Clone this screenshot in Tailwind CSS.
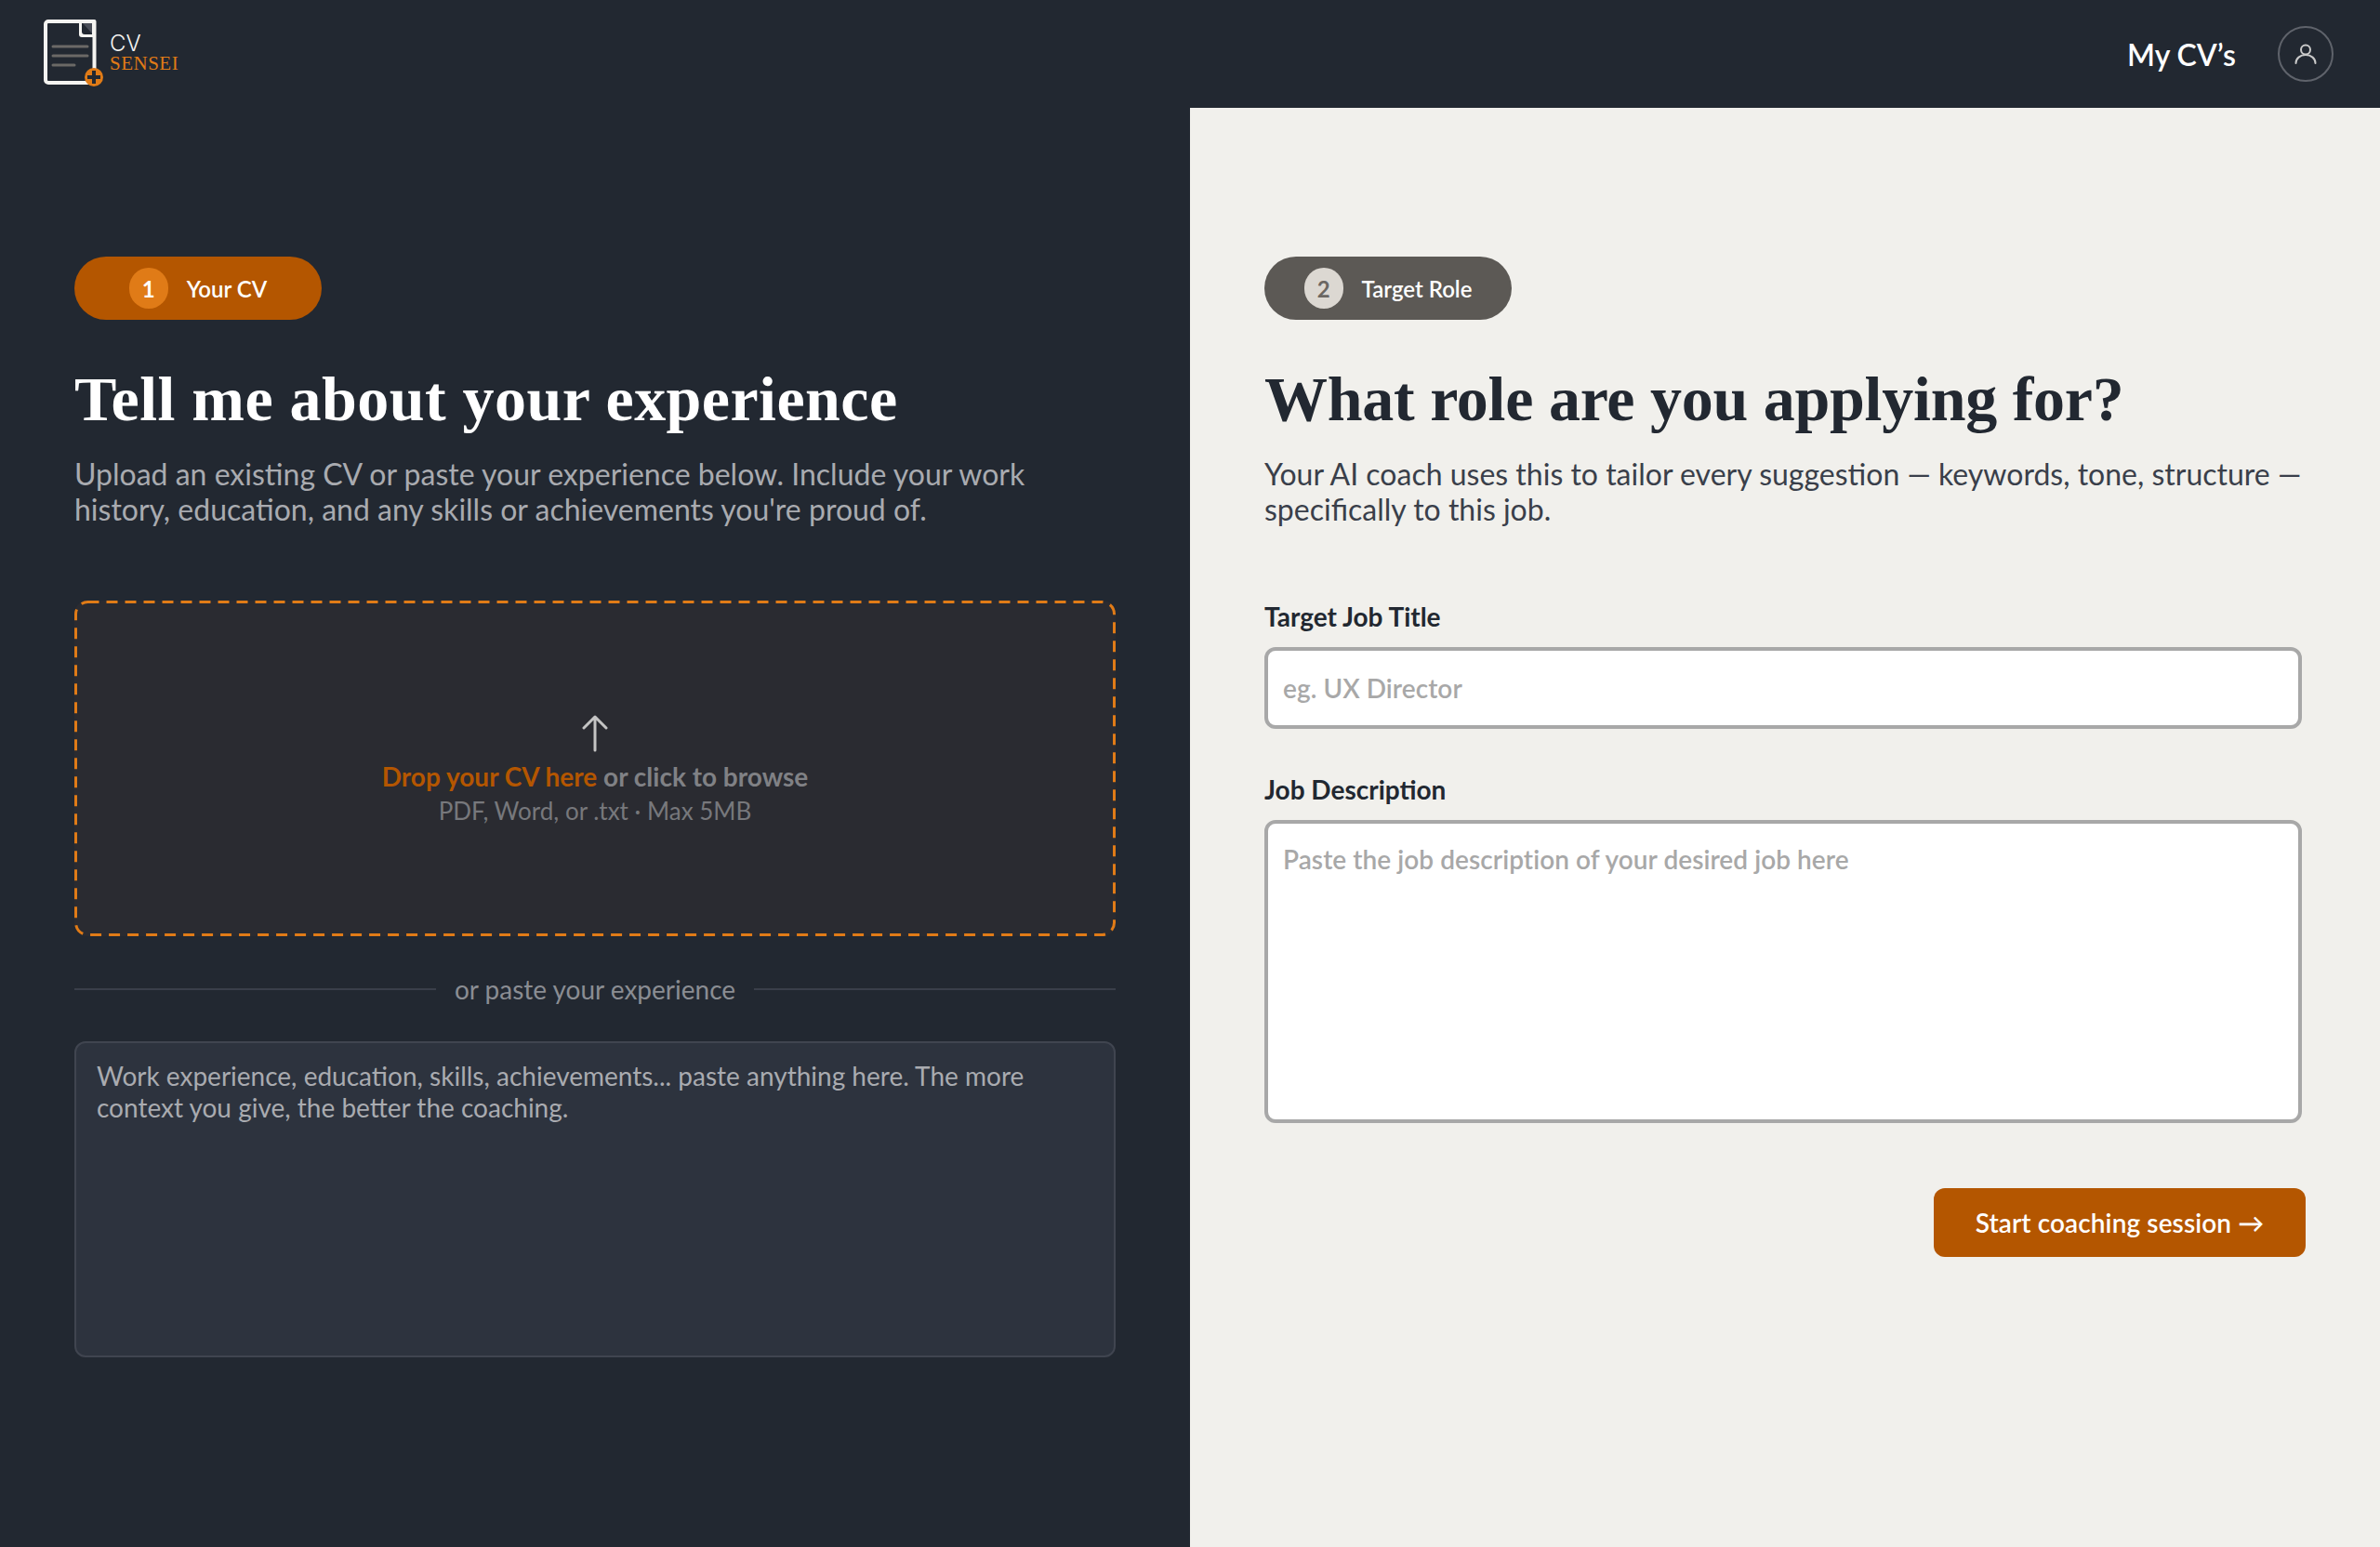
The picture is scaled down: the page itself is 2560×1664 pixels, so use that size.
<!DOCTYPE html>
<html lang="en">
<head>
  <meta charset="UTF-8" />
  <meta name="viewport" content="width=device-width, initial-scale=1.0"/>
  <title>CV Sensei</title>
  <script src="https://cdn.jsdelivr.net/npm/@tailwindcss/browser@4"></script>
</head>
<body class="bg-[#222831] font-['Lato',sans-serif] h-[1664px] overflow-hidden flex flex-col">
  <!-- top bar -->
  <header class="h-[116px] shrink-0 flex items-center justify-between pl-[47px] pr-[50px]">
    <div class="flex items-center pt-[2px]">
      <svg class="w-[150px] h-[76px]" viewBox="0 0 150 76" fill="none">
        <path d="M5 2h49.500V68H5a3 3 0 0 1-3-3V5a3 3 0 0 1 3-3z" stroke="#f5f4f1" stroke-width="4" stroke-linejoin="round"/>
        <path d="M38 2h16.500V19H41a3 3 0 0 1-3-3z" fill="#f5f4f1"/>
        <path d="M41 4h11v12H44a3 3 0 0 1-3-3z" fill="#222831"/>
        <path d="M42 4l10 11V4z" fill="#4a4e58"/>
        <path d="M10 29h37M10 39h37M10 49h23" stroke="#6b6966" stroke-width="3" stroke-linecap="round"/>
        <circle cx="54" cy="62" r="10" fill="#e07b17"/>
        <path d="M54 55v14M47 62h14" stroke="#222831" stroke-width="4"/>
        <text x="71" y="34" class="text-[24px] font-['Inter',sans-serif] font-light fill-[#f5f4f1]">CV</text>
        <text x="71" y="54" class="text-[21px] font-['Liberation_Serif',serif] tracking-[0.5px] fill-[#e07b17]">SENSEI</text>
      </svg>
    </div>
    <div class="flex items-center gap-[45px]">
      <a class="pt-[2px] text-[32px] font-semibold text-white">My CV’s</a>
      <div class="w-[60px] h-[60px] rounded-full border-2 border-[#5f636b] flex items-center justify-center">
        <svg class="w-[24px] h-[24px]" viewBox="0 0 24 24" fill="none" stroke="#c9c9c9" stroke-width="2" stroke-linecap="round">
          <circle cx="12" cy="7.500" r="5"/>
          <path d="M1.500 22c0-5 4.500-9 10.500-9s10.500 4 10.500 9"/>
        </svg>
      </div>
    </div>
  </header>

  <main class="flex-1 grid grid-cols-2">
    <!-- left: your CV -->
    <section class="pt-[160px] px-[80px]">
      <div class="w-[266px] h-[68px] rounded-full bg-[#b45600] flex items-center justify-center gap-[20px]">
        <span class="w-[42px] h-[44px] pt-[1px] rounded-full bg-[#e07b17] flex items-center justify-center text-[24px] font-bold text-white">1</span>
        <span class="pt-[2px] text-[24px] font-semibold text-white">Your CV</span>
      </div>
      <h1 class="mt-[45px] text-[68px] leading-[80px] tracking-[0.45px] font-bold font-['Liberation_Serif',serif] text-white">Tell me about your experience</h1>
      <p class="mt-[22px] text-[32px] leading-[38px] text-[#a9abb0]">Upload an existing CV or paste your experience below. Include your work history, education, and any skills or achievements you're proud of.</p>
      <div class="relative mt-[79px] h-[361px] pt-[4px] rounded-[14px] bg-[#2a2b31] flex flex-col items-center justify-center">
        <svg class="absolute inset-0 w-full h-full" viewBox="0 0 1120 361" fill="none">
          <rect x="1.500" y="1.500" width="1117" height="358" rx="13" stroke="#e07b17" stroke-width="3" stroke-dasharray="12 8"/>
        </svg>
        <svg class="w-[28px] h-[40px] mb-[7px]" viewBox="0 0 28 40" fill="none" stroke="#c4c4c4" stroke-width="3" stroke-linecap="round" stroke-linejoin="round">
          <path d="M14 38V3M2 14L14 2l12 12"/>
        </svg>
        <p class="text-[28px] leading-[38px] font-bold text-[#808185]"><span class="text-[#b45600]">Drop your CV here</span> or click to browse</p>
        <p class="mt-[1px] text-[26px] leading-[34px] text-[#77787c]">PDF, Word, or .txt · Max 5MB</p>
      </div>
      <div class="mt-[40px] flex items-center gap-[20px]">
        <div class="flex-1 h-[2px] bg-[#3a3f4a]"></div>
        <span class="text-[28px] leading-[34px] text-[#8a8d93]">or paste your experience</span>
        <div class="flex-1 h-[2px] bg-[#3a3f4a]"></div>
      </div>
      <textarea class="mt-[39px] block w-full h-[340px] rounded-[12px] border-2 border-[#404550] bg-[#2d333e] px-[22px] py-[18px] text-[28px] leading-[34px] text-white resize-none outline-none placeholder:text-[#a9abb0] placeholder:opacity-100" placeholder="Work experience, education, skills, achievements... paste anything here. The more context you give, the better the coaching."></textarea>
    </section>

    <!-- right: target role -->
    <section class="bg-[#f1f0ec] pt-[160px] px-[80px]">
      <div class="w-[266px] h-[68px] rounded-full bg-[#5c5955] flex items-center justify-center gap-[20px]">
        <span class="w-[42px] h-[44px] pt-[1px] rounded-full bg-[#dcd8d2] flex items-center justify-center text-[24px] font-bold text-[#6b6763]">2</span>
        <span class="pt-[2px] text-[24px] font-semibold text-white">Target Role</span>
      </div>
      <h1 class="mt-[45px] text-[68px] leading-[80px] tracking-[-0.26px] font-bold font-['Liberation_Serif',serif] text-[#222831]">What role are you applying for?</h1>
      <p class="mt-[22px] text-[32px] leading-[38px] text-[#3a3f4a]">Your AI coach uses this to tailor every suggestion — keywords, tone, structure — specifically to this job.</p>
      <label class="block mt-[79px] text-[28px] leading-[34px] font-bold text-[#222831]">Target Job Title</label>
      <input class="mt-[16px] block w-[1116px] h-[88px] rounded-[12px] border-[4px] border-[#a8a8a8] bg-white px-[16px] text-[28px] font-semibold tracking-[0.06px] outline-none placeholder:text-[#a8a8a8] placeholder:opacity-100" placeholder="eg. UX Director" />
      <label class="block mt-[48px] text-[28px] leading-[34px] font-bold text-[#222831]">Job Description</label>
      <textarea class="mt-[16px] block w-[1116px] h-[326px] rounded-[12px] border-[4px] border-[#a8a8a8] bg-white px-[16px] py-[21px] text-[28px] leading-[34px] font-semibold tracking-[0.06px] resize-none outline-none placeholder:text-[#a8a8a8] placeholder:opacity-100" placeholder="Paste the job description of your desired job here"></textarea>
      <div class="mt-[70px] flex justify-end">
        <button class="w-[400px] h-[74px] rounded-[12px] bg-[#b45600] text-[28px] font-semibold tracking-[0.1px] text-white">Start coaching session →</button>
      </div>
    </section>
  </main>
</body>
</html>
